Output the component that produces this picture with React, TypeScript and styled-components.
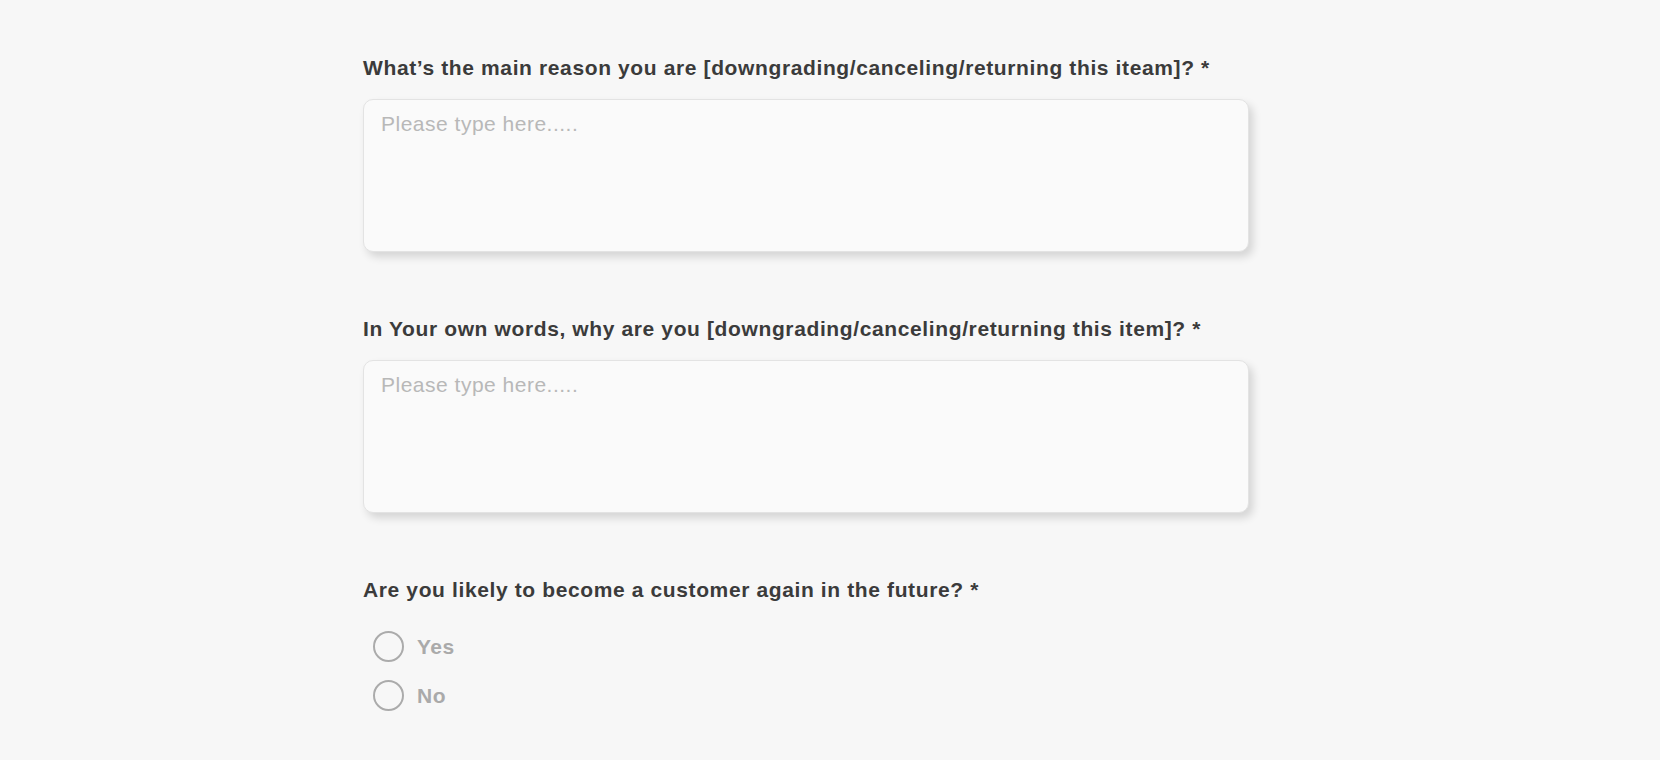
import React, { useState } from 'react';
import styled, { createGlobalStyle } from 'styled-components';

const GlobalStyle = createGlobalStyle`
    body {
        margin: 0;
        background: #f7f7f7;
        font-family: "Liberation Sans", Arial, sans-serif;
    }
`;

const questions = [
    { id: 'reason', label: 'What’s the main reason you are [downgrading/canceling/returning this iteam]? *' },
    { id: 'words', label: 'In Your own words, why are you [downgrading/canceling/returning this item]? *' },
];

const options = ['Yes', 'No'];

const App = () => {
    const [answers, setAnswers] = useState<Record<string, string>>({});
    const [again, setAgain] = useState('');

    return (
        <>
            <GlobalStyle />
            <Page>
                <Form>
                    {questions.map((q) => (
                        <Field key={q.id}>
                            <Label>{q.label}</Label>
                            <TextBox
                                placeholder="Please type here....."
                                value={answers[q.id] || ''}
                                onChange={(e) => setAnswers({ ...answers, [q.id]: e.target.value })}
                            />
                        </Field>
                    ))}
                    <Field>
                        <Label>Are you likely to become a customer again in the future? *</Label>
                        <RadioList>
                            {options.map((o) => (
                                <RadioRow key={o}>
                                    <RadioInput
                                        type="radio"
                                        name="again"
                                        checked={again === o}
                                        onChange={() => setAgain(o)}
                                    />
                                    <RadioText>{o}</RadioText>
                                </RadioRow>
                            ))}
                        </RadioList>
                    </Field>
                </Form>
            </Page>
        </>
    );
};

const Page = styled.div`
    min-height: 760px;
    padding: 56px 0 0 363px;
    box-sizing: border-box;
`;

const Form = styled.div`
    width: 886px;
    display: flex;
    flex-direction: column;
    gap: 65px;
`;

const Field = styled.div`
    display: flex;
    flex-direction: column;
    gap: 19px;
`;

const Label = styled.div`
    font-size: 21px;
    line-height: 24px;
    font-weight: bold;
    color: #3b3b3b;
    white-space: nowrap;
    letter-spacing: 0.62px;
`;

const TextBox = styled.textarea`
    height: 153px;
    box-sizing: border-box;
    padding: 12px 17px;
    border: 1px solid #e3e3e3;
    border-radius: 10px;
    background: #fafafa;
    box-shadow: 4px 5px 9px rgba(0, 0, 0, 0.14);
    font-family: "Liberation Sans", Arial, sans-serif;
    font-size: 21px;
    line-height: 24px;
    letter-spacing: 0.5px;
    color: #333;
    resize: none;
    outline: none;

    &::placeholder {
        color: #b8b8b8;
    }
`;

const RadioList = styled.div`
    display: flex;
    flex-direction: column;
    gap: 18px;
    padding: 10px 0 0 10px;
`;

const RadioRow = styled.label`
    display: flex;
    align-items: center;
    gap: 13px;
    cursor: pointer;
`;

const RadioInput = styled.input`
    appearance: none;
    margin: 0;
    width: 31px;
    height: 31px;
    border: 2px solid #ababab;
    border-radius: 50%;
    box-sizing: border-box;
    background: transparent;
    cursor: pointer;

    &:checked {
        background: radial-gradient(circle, #ababab 0 6px, transparent 7px);
    }
`;

const RadioText = styled.span`
    font-size: 21px;
    font-weight: bold;
    letter-spacing: 0.5px;
    color: #aaaaaa;
`;

export default App;
